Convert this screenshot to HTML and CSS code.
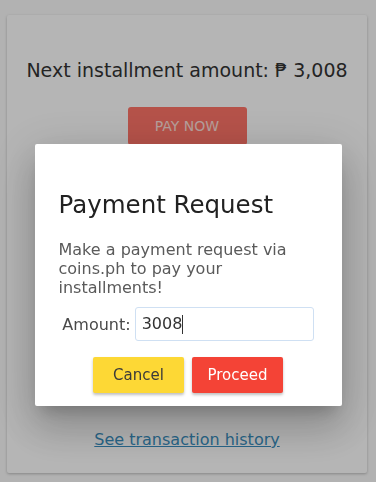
FILE: index.html
```html
<!DOCTYPE html>
<html>
<head>
<meta charset="utf-8">
<link rel="stylesheet" href="styles.css">
</head>
<body>
<main class="card">
  <h2 class="next-amount">Next installment amount: ₱ 3,008</h2>
  <button class="pay-now">PAY NOW</button>
  <div class="spacer"></div>
  <a class="history" href="#">See transaction history</a>
</main>
<div class="backdrop">
  <div class="dialog">
    <h1 class="dialog-title">Payment Request</h1>
    <p class="dialog-text">Make a payment request via coins.ph to pay your installments!</p>
    <div class="amount-row">
      <label class="amount-label" for="amt">Amount:</label>
      <div class="amount-input" id="amt">3008<span class="caret"></span></div>
    </div>
    <div class="actions">
      <button class="btn btn-cancel">Cancel</button>
      <button class="btn btn-proceed">Proceed</button>
    </div>
  </div>
</div>
</body>
</html>
```
FILE: styles.css
```css
* { box-sizing: border-box; }
html, body { margin: 0; padding: 0; }
body {
  background: #fbfbfb;
  font-family: "DejaVu Sans", "Noto Sans", sans-serif;
  height: 482px;
  overflow: hidden;
  padding: 15px 9px 9px 7px;
}
.card {
  background: #ffffff;
  height: 458px;
  box-shadow: 0 1px 3px rgba(0,0,0,0.25);
  border-radius: 2px;
  display: flex;
  flex-direction: column;
  align-items: center;
  padding-top: 42px;
}
.next-amount {
  margin: 0;
  font-weight: 400;
  font-size: 19px;
  line-height: 26px;
  color: #333;
  white-space: nowrap;
}
.pay-now {
  margin-top: 24px;
  width: 119px;
  height: 38px;
  border: none;
  border-radius: 3px;
  background: #ff7468;
  color: #ffe0dc;
  font-family: inherit;
  font-size: 14px;
}
.spacer { flex: 1; }
.history {
  margin-bottom: 24px;
  font-size: 16px;
  color: #3a8fc0;
  text-decoration: underline;
}
.backdrop {
  position: fixed;
  inset: 0;
  background: rgba(0,0,0,0.29);
  padding-top: 144px;
  display: flex;
  justify-content: center;
}
.dialog {
  width: 307px;
  height: 262px;
  background: #fff;
  border-radius: 2px;
  box-shadow: 0 11px 15px -7px rgba(0,0,0,.2), 0 24px 38px 3px rgba(0,0,0,.14), 0 9px 46px 8px rgba(0,0,0,.12);
  padding: 46px 24px 13px 24px;
  display: flex;
  flex-direction: column;
}
.dialog-title {
  margin: 0;
  font-weight: 400;
  font-size: 24.5px;
  line-height: 30px;
  color: #212121;
}
.dialog-text {
  margin: 20px 0 0;
  font-size: 16px;
  line-height: 19px;
  color: #5a5a5a;
}
.amount-row {
  margin-top: 10px;
  display: flex;
  align-items: center;
  justify-content: center;
  gap: 4px;
}
.amount-label {
  font-size: 16px;
  color: #4a4a4a;
}
.amount-input {
  width: 179px;
  height: 34px;
  border: 1px solid #cfe0f3;
  border-radius: 3px;
  padding: 0 6px;
  font-size: 16px;
  line-height: 32px;
  color: #333;
  display: flex;
  align-items: center;
}
.caret {
  display: inline-block;
  width: 1px;
  height: 19px;
  background: #333;
}
.actions {
  margin-top: 16px;
  display: flex;
  justify-content: center;
  gap: 8px;
}
.btn {
  width: 91px;
  height: 36px;
  border: none;
  border-radius: 2px;
  font-family: inherit;
  font-size: 15px;
  box-shadow: 0 2px 3px rgba(0,0,0,0.25);
}
.btn-cancel { background: #fdd835; color: #3a3a3a; }
.btn-proceed { background: #f44336; color: #fff; }
```
